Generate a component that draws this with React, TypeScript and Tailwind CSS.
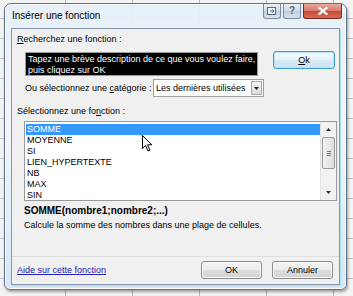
import React from "react";

const FONT = { fontFamily: '"Liberation Sans", Arial, sans-serif' };

const functions = ["SOMME", "MOYENNE", "SI", "LIEN_HYPERTEXTE", "NB", "MAX", "SIN"];

function Cursor() {
  return (
    <svg
      className="absolute left-[130px] top-[106px]"
      width="11"
      height="17"
      viewBox="0 0 11 17"
    >
      <path
        d="M0.5 0.5 L0.5 13.5 L3.5 10.5 L6 16 L8 15 L5.5 9.8 L9.8 9.8 Z"
        fill="#fff"
        stroke="#000"
        strokeWidth="1"
        strokeLinejoin="round"
      />
    </svg>
  );
}

function VistaButton({
  children,
  focused,
  className,
}: {
  children: React.ReactNode;
  focused?: boolean;
  className?: string;
}) {
  return (
    <div
      className={`flex items-center justify-center h-[18px] rounded-[3px] border text-[9px] text-black ${
        focused
          ? "border-[#3c9fd0] bg-[linear-gradient(#f4fafd_0%,#e8f3fa_48%,#d6eaf6_52%,#cde4f3_100%)] shadow-[inset_0_0_0_1px_#b8e0f5]"
          : "border-[#8a8a8a] bg-[linear-gradient(#f4f4f4_0%,#ececec_48%,#dddddd_52%,#d1d1d1_100%)] shadow-[inset_0_0_0_1px_#fbfbfb]"
      } ${className ?? ""}`}
    >
      {children}
    </div>
  );
}

export default function App() {
  return (
    <div
      className="w-[353px] h-[296px] overflow-hidden pl-[4px] pt-[3px] bg-[#f4f4f4] bg-[linear-gradient(to_right,#b9b9b9_1px,transparent_1px),linear-gradient(to_bottom,#c4c4c4_1px,transparent_1px)] bg-[size:67px_20px] bg-[position:65px_18px]"
      style={FONT}
    >
      {/* window frame */}
      <div className="w-[343px] h-[287px] rounded-t-[7px] rounded-b-[6px] border border-[#5f738a] bg-[linear-gradient(180deg,rgba(230,239,248,0.94)_0%,rgba(240,246,251,0.93)_45%,rgba(212,230,245,0.93)_100%)] shadow-[inset_0_0_0_1px_rgba(255,255,255,0.8),1px_2px_3px_rgba(0,0,0,0.35)] flex flex-col">
        {/* title bar */}
        <div className="h-[24px] flex justify-between">
          <div className="pl-[7px] pt-[6px] text-[10px] leading-[12px] text-black">Insérer une fonction</div>
          <div className="flex gap-[2px] pr-[4px]">
            <div className="w-[18px] h-[15px] rounded-b-[3px] border border-t-0 border-[#7c8ba0] bg-[linear-gradient(#e6edf5_0%,#d3dde9_50%,#c0cedf_51%,#d6e2ef_100%)] flex items-center justify-center">
              <svg width="10" height="9" viewBox="0 0 10 9">
                <rect x="0.5" y="0.5" width="8" height="7" fill="#eef2f7" stroke="#5a6b80" />
                <path d="M3 4 H7 M5.5 2.5 L7 4 L5.5 5.5" stroke="#4a5a70" fill="none" />
              </svg>
            </div>
            <div className="w-[18px] h-[15px] rounded-b-[3px] border border-t-0 border-[#7c8ba0] bg-[linear-gradient(#e6edf5_0%,#d3dde9_50%,#c0cedf_51%,#d6e2ef_100%)] flex items-center justify-center text-[10px] leading-none text-[#56677d] font-bold">
              ?
            </div>
            <div className="w-[39px] h-[15px] rounded-b-[3px] border border-t-0 border-[#7a2a22] bg-[linear-gradient(#e9a99c_0%,#d7786a_50%,#c44a38_51%,#d96a52_100%)] flex items-center justify-center">
              <svg width="10" height="8" viewBox="0 0 10 8">
                <path d="M1.5 1 L8.5 7 M8.5 1 L1.5 7" stroke="#fff" strokeWidth="2.2" strokeLinecap="square" />
              </svg>
            </div>
          </div>
        </div>

        {/* client area */}
        <div className="mx-[6px] h-[257px] border border-[#8598ad] bg-[#f0f0f0] relative text-[9px] text-black leading-[11px] shadow-[1px_1px_0_#a8dcf2]">
          <div className="pl-[5px] pt-[5px]">
            <span className="underline">R</span>echerchez une fonction :
          </div>

          <div className="flex pl-[13px] pt-[7px] gap-[15px]">
            <div className="w-[233px] h-[24px] bg-black border border-[#9a9a9a] text-white pl-[2px] pt-px leading-[11px]">
              Tapez une brève description de ce que vous voulez faire,
              <br />
              puis cliquez sur OK
            </div>
            <VistaButton focused className="w-[62px] -mt-[1px]">
              <span>
                <span className="underline">O</span>k
              </span>
            </VistaButton>
          </div>

          <div className="flex items-center pl-[13px] pt-[3px]">
            <div className="w-[128px]">
              Ou sélectionnez une <span className="underline">c</span>atégorie :
            </div>
            <div className="w-[111px] h-[18px] border border-[#a0a0a0] bg-white flex items-center justify-between pl-[2px] pr-[1px]">
              <span>Les dernières utilisées</span>
              <div className="w-[11px] h-[14px] border border-[#a9a9a9] bg-[linear-gradient(#f5f5f5,#dcdcdc)] flex items-center justify-center">
                <svg width="5" height="3" viewBox="0 0 5 3">
                  <path d="M0 0 H5 L2.5 3 Z" fill="#222" />
                </svg>
              </div>
            </div>
          </div>

          <div className="pl-[5px] pt-[9px]">
            Sélectionnez une fo<span className="underline">n</span>ction :
          </div>

          {/* function list */}
          <div className="ml-[12px] mt-[4px] w-[313px] h-[80px] border border-[#9a9a9a] bg-white flex">
            <div className="flex-1 pt-[2px] pl-[1px]">
              {functions.map((f, i) => (
                <div
                  key={f}
                  className={`h-[11px] leading-[11px] pl-[1px] ${
                    i === 0 ? "bg-[#3399ff] text-white" : "text-black"
                  }`}
                >
                  {f}
                </div>
              ))}
            </div>
            <div className="w-[16px] bg-[#f2f2f2] border-l border-[#e2e2e2] flex flex-col items-center">
              <div className="h-[15px] flex items-center justify-center">
                <svg width="5" height="3" viewBox="0 0 5 3">
                  <path d="M0 3 H5 L2.5 0 Z" fill="#333" />
                </svg>
              </div>
              <div className="w-[13px] h-[32px] rounded-[2px] border border-[#9a9a9a] bg-[linear-gradient(to_right,#f2f2f2,#dedede)] flex flex-col items-center justify-center gap-[1px]">
                <div className="w-[4px] h-px bg-[#777]" />
                <div className="w-[4px] h-px bg-[#777]" />
                <div className="w-[4px] h-px bg-[#777]" />
              </div>
              <div className="flex-1" />
              <div className="h-[15px] flex items-center justify-center">
                <svg width="5" height="3" viewBox="0 0 5 3">
                  <path d="M0 0 H5 L2.5 3 Z" fill="#333" />
                </svg>
              </div>
            </div>
          </div>

          <div className="pl-[12px] pt-[4px] font-bold text-[10px]">SOMME(nombre1;nombre2;...)</div>
          <div className="pl-[12px] pt-[4px]">
            Calcule la somme des nombres dans une plage de cellules.
          </div>

          <div className="mt-[25px] h-px bg-[#dedede]" />

          <div className="flex items-center pl-[5px] pt-[4px]">
            <div className="flex-1 text-[#2323b4] underline">Aide sur cette fonction</div>
            <div className="flex gap-[10px] pr-[6px]">
              <VistaButton className="w-[61px]">OK</VistaButton>
              <VistaButton className="w-[61px]">Annuler</VistaButton>
            </div>
          </div>

          <Cursor />
        </div>
      </div>
    </div>
  );
}
